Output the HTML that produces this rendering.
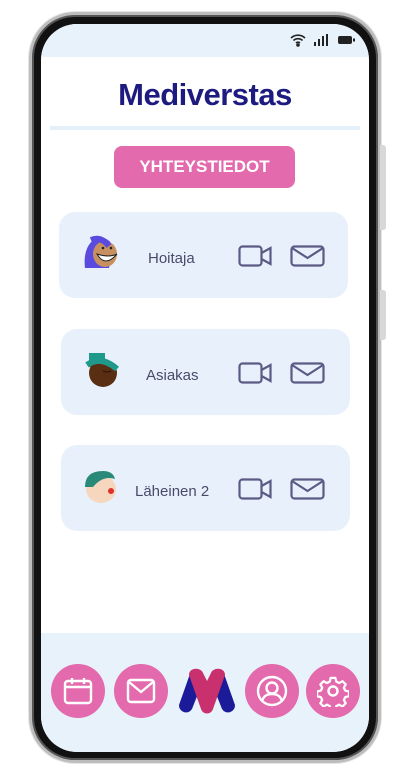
<!DOCTYPE html>
<html><head><meta charset="utf-8"><style>
*{margin:0;padding:0;box-sizing:border-box}
body{width:414px;height:784px;background:#fff;position:relative;overflow:hidden;font-family:"Liberation Sans",sans-serif}
.frame{position:absolute;left:29px;top:12px;width:352px;height:751px;border-radius:46px;background:#111;border:3px solid #bdbdbd;box-shadow:0 0 0 1px #e6e6e6, inset 0 0 0 2px #555}
.btn{position:absolute;left:380px;width:6px;background:#d8d8d8;border-radius:0 3px 3px 0}
.screen{position:absolute;left:41px;top:24px;width:328px;height:728px;border-radius:36px;background:#fff;overflow:hidden}
.status{position:absolute;left:0;top:0;width:100%;height:33px;background:#e8f2fb}
.title{position:absolute;left:0;width:100%;top:53px;text-align:center;font-size:31px;font-weight:bold;color:#1e1b80;letter-spacing:-0.5px}
.line{position:absolute;left:9px;width:310px;top:102px;height:4px;background:#e4f0fa}
.pill{position:absolute;left:73px;top:122px;width:181px;height:42px;background:#e36aad;border-radius:8px;color:#fff;font-weight:bold;font-size:17px;text-align:center;line-height:42px}
.card{position:absolute;width:289px;height:86px;background:#e8f1fb;border-radius:16px}
.card .name{position:absolute;top:4px;line-height:86px;font-size:15px;color:#4a4a6a}
.card svg{position:absolute}
.nav{position:absolute;left:0;top:609px;width:100%;height:119px;background:#e8f2fb}
.c{position:absolute;top:640px;width:54px;height:54px;border-radius:50%;background:#e36aad}
.c svg{position:absolute;left:11px;top:11px}
</style></head><body>
<div class="frame"></div>
<div class="btn" style="top:145px;height:85px"></div>
<div class="btn" style="top:290px;height:50px"></div>
<div class="screen">
<div class="status">
<svg style="position:absolute;left:249px;top:9px" width="16" height="14" viewBox="0 0 16 14" fill="none" stroke="#222" stroke-width="1.6"><path d="M1 5a10 10 0 0 1 14 0M3.5 7.5a6.5 6.5 0 0 1 9 0M6 10a3 3 0 0 1 4 0"/><circle cx="8" cy="12" r="1" fill="#222"/></svg>
<svg style="position:absolute;left:273px;top:10px" width="14" height="12"><rect x="0" y="8" width="2" height="4" fill="#222"/><rect x="4" y="5" width="2" height="7" fill="#222"/><rect x="8" y="2" width="2" height="10" fill="#222"/><rect x="12" y="0" width="2" height="12" fill="#222"/></svg>
<svg style="position:absolute;left:297px;top:12px" width="17" height="8"><rect x="0" y="0" width="14" height="8" rx="2" fill="#222"/><rect x="15" y="2.5" width="2" height="3" fill="#222"/></svg>
</div>
<div class="title">Mediverstas</div>
<div class="line"></div>
<div class="pill">YHTEYSTIEDOT</div>

<div class="card" style="left:18px;top:188px">
<svg style="left:22px;top:22px" width="40" height="40" viewBox="0 0 40 40"><path d="M4 34C2 18 8 4 20 4c8 0 12 6 12 12L28 34Z" fill="#5b4ae0"/><ellipse cx="24" cy="20" rx="12" ry="13" fill="#c89060"/><path d="M16 20q8 14 20 0q-8 4-20 0z" fill="#fff" stroke="#222"/><path d="M10 6q10-4 18 6" stroke="#5b4ae0" stroke-width="6" fill="none"/><circle cx="22" cy="14" r="1.3" fill="#222"/><circle cx="30" cy="14" r="1.3" fill="#222"/></svg>
<div class="name" style="left:89px">Hoitaja</div>
<svg style="left:179px;top:33px" width="35" height="22" viewBox="0 0 35 22" fill="none" stroke="#5a5a85" stroke-width="2.2"><rect x="1.5" y="1.5" width="22" height="19" rx="3"/><path d="M23.5 8l9-5v16l-9-5"/></svg>
<svg style="left:231px;top:33px" width="35" height="22" viewBox="0 0 35 22" fill="none" stroke="#5a5a85" stroke-width="2.2"><rect x="1.5" y="1.5" width="32" height="19" rx="3"/><path d="M2 3l15.5 10L33 3"/></svg>
</div>

<div class="card" style="left:20px;top:305px">
<svg style="left:22px;top:20px" width="40" height="42" viewBox="0 0 40 42"><path d="M6 4h16v14H6z" fill="#1f9a8a"/><circle cx="20" cy="24" r="14" fill="#5a2e12"/><path d="M4 16q14-10 30 4" stroke="#1f9a8a" stroke-width="6" fill="none"/><path d="M20 22q4 2 8 0" stroke="#2a1206" fill="none"/></svg>
<div class="name" style="left:85px">Asiakas</div>
<svg style="left:177px;top:33px" width="35" height="22" viewBox="0 0 35 22" fill="none" stroke="#5a5a85" stroke-width="2.2"><rect x="1.5" y="1.5" width="22" height="19" rx="3"/><path d="M23.5 8l9-5v16l-9-5"/></svg>
<svg style="left:229px;top:33px" width="35" height="22" viewBox="0 0 35 22" fill="none" stroke="#5a5a85" stroke-width="2.2"><rect x="1.5" y="1.5" width="32" height="19" rx="3"/><path d="M2 3l15.5 10L33 3"/></svg>
</div>

<div class="card" style="left:20px;top:421px">
<svg style="left:20px;top:22px" width="40" height="40" viewBox="0 0 40 40"><ellipse cx="20" cy="22" rx="15" ry="14" fill="#f6d7bd"/><path d="M4 20q0-16 18-16q10 0 12 8q-12-4-22 8z" fill="#2a8a7a"/><circle cx="30" cy="24" r="3" fill="#e0302e"/></svg>
<div class="name" style="left:74px">Läheinen 2</div>
<svg style="left:177px;top:33px" width="35" height="22" viewBox="0 0 35 22" fill="none" stroke="#5a5a85" stroke-width="2.2"><rect x="1.5" y="1.5" width="22" height="19" rx="3"/><path d="M23.5 8l9-5v16l-9-5"/></svg>
<svg style="left:229px;top:33px" width="35" height="22" viewBox="0 0 35 22" fill="none" stroke="#5a5a85" stroke-width="2.2"><rect x="1.5" y="1.5" width="32" height="19" rx="3"/><path d="M2 3l15.5 10L33 3"/></svg>
</div>

<div class="nav"></div>
<div class="c" style="left:10px"><svg width="32" height="32" viewBox="0 0 32 32" fill="none" stroke="#fff" stroke-width="2.4"><rect x="3" y="6" width="26" height="22" rx="3"/><path d="M3 12h26M10 3v6M22 3v6"/></svg></div>
<div class="c" style="left:73px"><svg width="32" height="32" viewBox="0 0 32 32" fill="none" stroke="#fff" stroke-width="2.4"><rect x="3" y="5" width="26" height="22" rx="3"/><path d="M4 7l12 10 12-10"/></svg></div>
<svg style="position:absolute;left:136px;top:643px" width="60" height="48" viewBox="0 0 60 48"><path d="M14 4L2 38a7 7 0 0 0 13 4L26 14z" fill="#1b1b9a"/><path d="M46 4l12 34a7 7 0 0 1-13 4L34 14z" fill="#1b1b9a"/><path d="M12 8c0-8 12-8 14-2l4 8 4-8c2-6 14-6 14 2l-12 34c-2 6-10 6-12 0z" fill="#c8306e"/></svg>
<div class="c" style="left:204px"><svg width="32" height="32" viewBox="0 0 32 32" fill="none" stroke="#fff" stroke-width="2.4"><circle cx="16" cy="16" r="14"/><circle cx="16" cy="13" r="5.5"/><path d="M6 26c2-6 6-7 10-7s8 1 10 7"/></svg></div>
<div class="c" style="left:265px"><svg width="32" height="32" viewBox="0 0 32 32" fill="none" stroke="#fff" stroke-width="2.4" stroke-linejoin="round"><path d="M13.5 2h5l1 4 3 1.5 3.5-2 3.5 3.5-2 3.5 1.5 3 4 1v5l-4 1-1.5 3 2 3.5-3.5 3.5-3.5-2-3 1.5-1 4h-5l-1-4-3-1.5-3.5 2-3.5-3.5 2-3.5-1.5-3-4-1v-5l4-1 1.5-3-2-3.5 3.5-3.5 3.5 2 3-1.5z" transform="translate(1 1) scale(0.94)"/><circle cx="16" cy="16" r="4.5"/></svg></div>
</div>
</body></html>
